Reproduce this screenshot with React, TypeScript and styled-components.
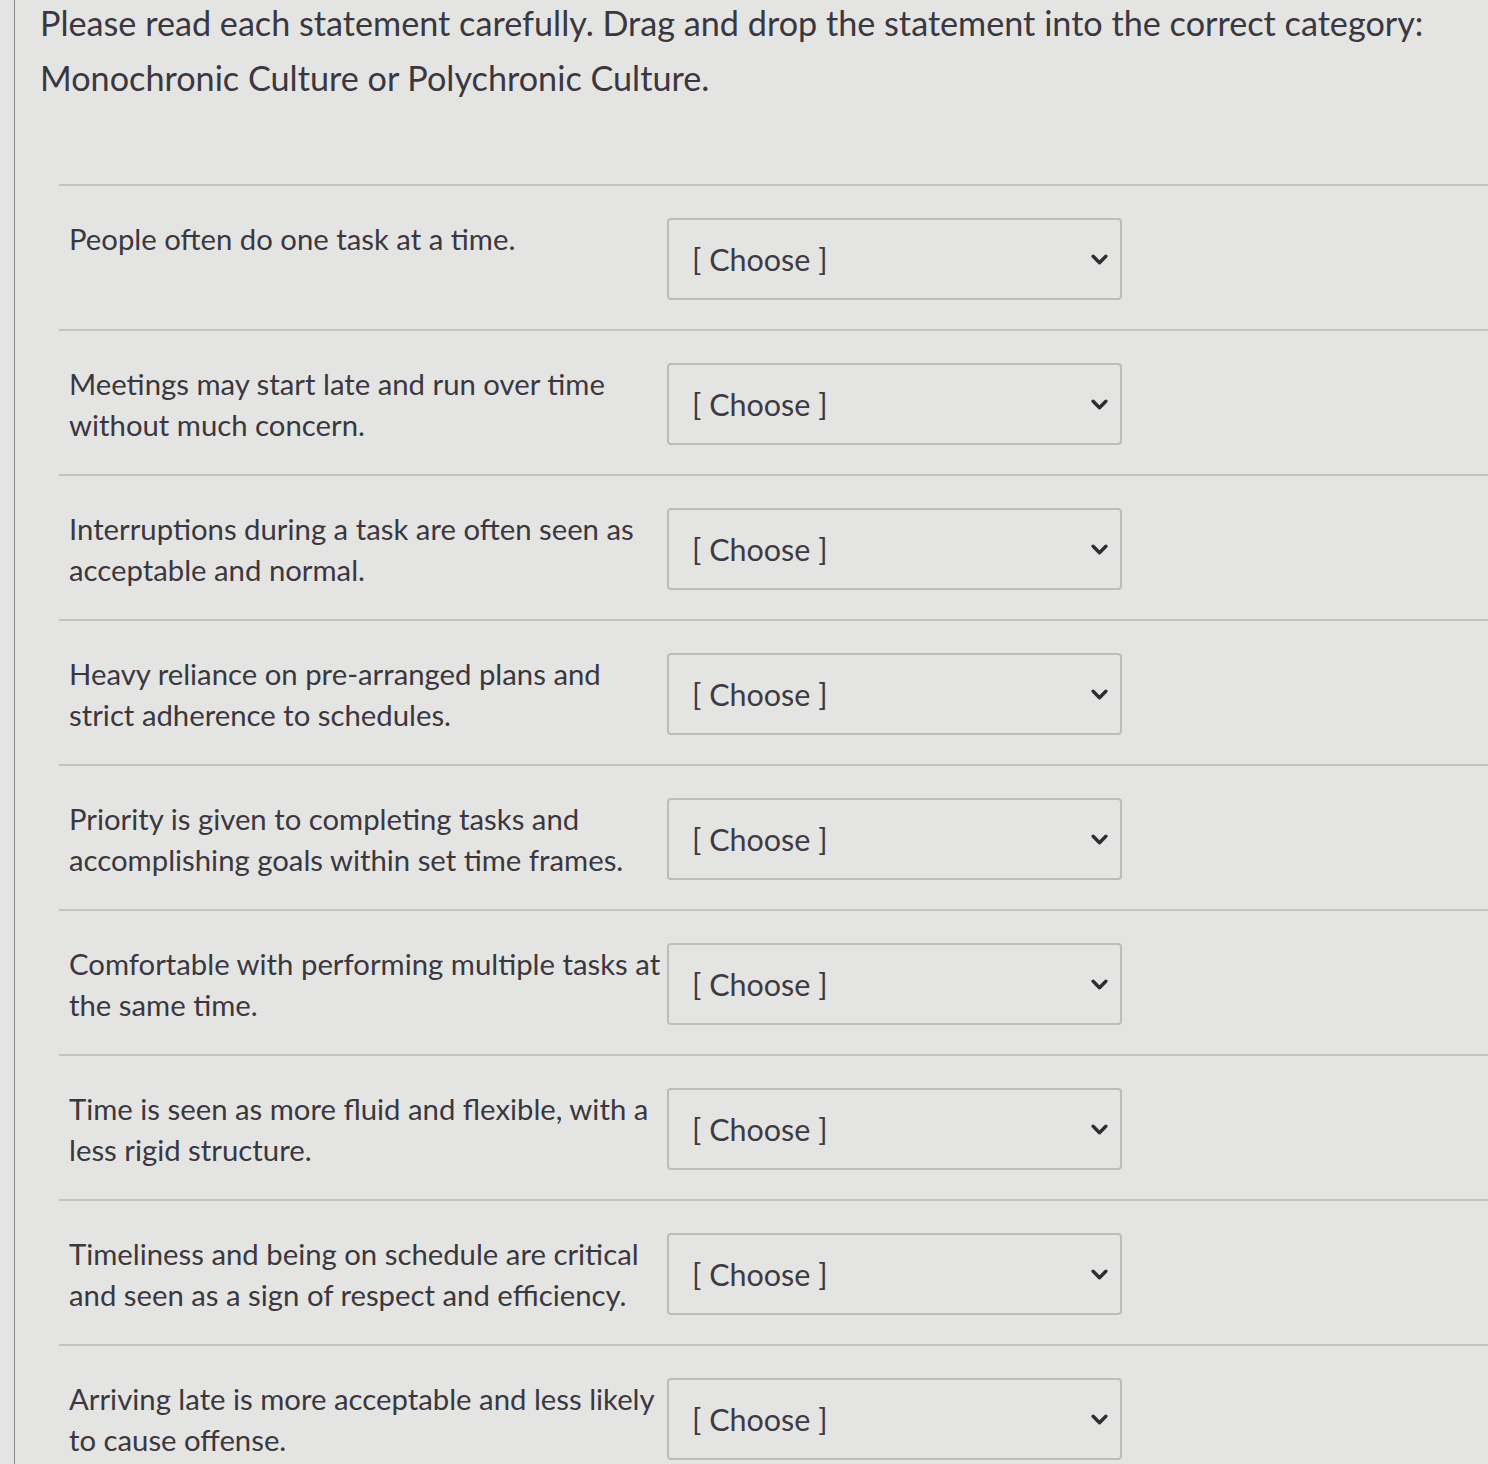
import React from "react";
import styled, { createGlobalStyle } from "styled-components";

const GlobalStyle = createGlobalStyle`
  html, body {
    margin: 0;
    padding: 0;
    background: #e4e4e2;
  }
  body {
    font-family: Lato, "Open Sans", sans-serif;
    color: #3b3741;
  }
`;

const statements: string[][] = [
  ["People often do one task at a time."],
  ["Meetings may start late and run over time", "without much concern."],
  ["Interruptions during a task are often seen as", "acceptable and normal."],
  ["Heavy reliance on pre-arranged plans and", "strict adherence to schedules."],
  ["Priority is given to completing tasks and", "accomplishing goals within set time frames."],
  ["Comfortable with performing multiple tasks at", "the same time."],
  ["Time is seen as more fluid and flexible, with a", "less rigid structure."],
  ["Timeliness and being on schedule are critical", "and seen as a sign of respect and efficiency."],
  ["Arriving late is more acceptable and less likely", "to cause offense."],
];

function App() {
  return (
    <Page>
      <GlobalStyle />
      <Title>
        Please read each statement carefully. Drag and drop the statement into the correct category:
        <br />
        Monochronic Culture or Polychronic Culture.
      </Title>
      <List>
        {statements.map((lines, i) => (
          <Row key={i}>
            <Statement>
              {lines.map((l, j) => (
                <Line key={j}>{l}</Line>
              ))}
            </Statement>
            <Select>
              <span>[ Choose ]</span>
              <Chevron viewBox="0 0 16 10">
                <path d="M2 2 L8 8 L14 2" />
              </Chevron>
            </Select>
          </Row>
        ))}
      </List>
    </Page>
  );
}

export default App;

const Page = styled.div`
  margin-left: 14px;
  border-left: 1px solid #8e8c8e;
  min-height: 1464px;
  box-sizing: border-box;
  overflow: hidden;
`;

const Title = styled.div`
  margin-top: -5px;
  padding-left: 25px;
  font-size: 34.2px;
  line-height: 55px;
  white-space: nowrap;
  margin-bottom: 79px;
  color: #3b3741;
`;

const List = styled.div`
  margin-left: 44px;
`;

const Row = styled.div`
  display: grid;
  grid-template-columns: 598px 455px;
  align-items: start;
  padding: 32px 0 29px 10px;
  border-top: 2px solid #c4c3c3;
`;

const Statement = styled.div`
  font-size: 29.3px;
  line-height: 41px;
  color: #3b3741;
`;

const Line = styled.div`
  white-space: nowrap;
`;

const Select = styled.div`
  height: 82px;
  box-sizing: border-box;
  border: 2px solid #bdbcbc;
  border-radius: 4px;
  display: flex;
  align-items: center;
  justify-content: space-between;
  padding: 0 12px 0 23px;
  font-size: 30.5px;
  color: #3e3a44;
`;

const Chevron = styled.svg`
  width: 17px;
  height: 11px;
  fill: none;
  stroke: #2f2d33;
  stroke-width: 3.2;
  stroke-linecap: round;
  stroke-linejoin: round;
`;
